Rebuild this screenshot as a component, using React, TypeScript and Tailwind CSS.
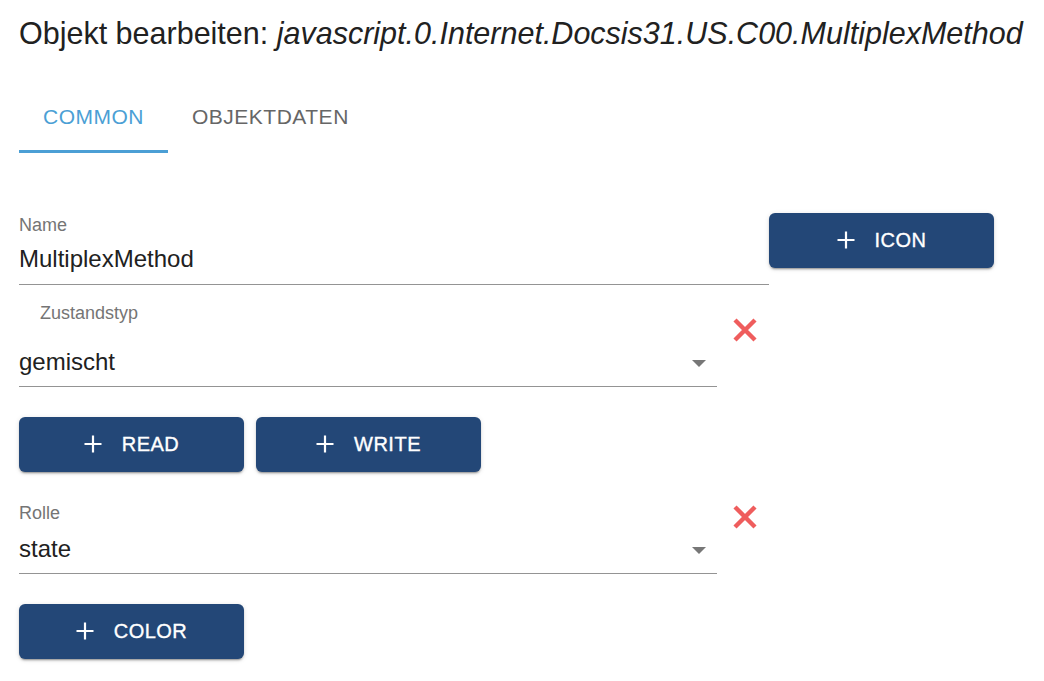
import React from "react";

const font = "font-['Liberation_Sans',Arial,sans-serif]";

const Plus = () => (
    <svg width="18" height="18" viewBox="0 0 18 18" className="shrink-0">
        <path d="M9 0.5V17.5M0.5 9H17.5" stroke="#fff" strokeWidth="2.2" />
    </svg>
);

const RemoveX = () => (
    <svg width="26" height="26" viewBox="0 0 26 26">
        <path d="M3 3L23 23M23 3L3 23" stroke="#ef5d5d" strokeWidth="4.4" />
    </svg>
);

const DropArrow = () => (
    <svg width="14" height="7" viewBox="0 0 14 7" className="absolute right-[11px] bottom-[19px]">
        <path d="M0 0H14L7 7Z" fill="#777" />
    </svg>
);

const AddButton = ({ label }: { label: string }) => (
    <button className="flex h-[55px] w-[225px] shrink-0 items-center justify-center gap-[20px] rounded-[6px] bg-[#234777] pb-[1px] text-[20px] uppercase tracking-[0.5px] text-white shadow-[0_3px_1px_-2px_rgba(0,0,0,0.2),0_2px_2px_0_rgba(0,0,0,0.14),0_1px_5px_0_rgba(0,0,0,0.12)]">
        <Plus />
        <span className="leading-[24px] [-webkit-text-stroke:0.35px_#fff]">{label}</span>
    </button>
);

export default function App() {
    return (
        <div className={`h-[681px] w-[1044px] overflow-hidden bg-white pl-[19px] text-[#212121] ${font}`}>
            <h1 className="h-[51px] pt-[15px] text-[30.5px] leading-[36px] whitespace-nowrap">
                Objekt bearbeiten: <i>javascript.0.Internet.Docsis31.US.C00.MultiplexMethod</i>
            </h1>

            {/* tabs */}
            <div className="mt-[30px] flex">
                <div className="flex h-[72px] items-center border-b-[3px] border-[#4b9fd5] px-[24px] pt-[3px] text-[21px] tracking-[0.5px] text-[#4b9fd5]">
                    COMMON
                </div>
                <div className="flex h-[72px] items-center border-b-[3px] border-transparent px-[24px] pt-[3px] text-[21px] tracking-[0.5px] text-[#666]">
                    OBJEKTDATEN
                </div>
            </div>

            {/* name + icon */}
            <div className="mt-[60px] flex items-start">
                <div className="w-[750px] border-b border-[#949494] pt-[2px] pb-[10px]">
                    <div className="h-[20px] text-[18px] leading-[20px] text-[#757575]">Name</div>
                    <div className="mt-[9px] h-[30px] text-[24px] leading-[30px]">MultiplexMethod</div>
                </div>
                <AddButton label="Icon" />
            </div>

            {/* zustandstyp */}
            <div className="mt-[18px] flex items-start">
                <div className="relative w-[698px] border-b border-[#949494] pb-[9px]">
                    <div className="h-[20px] pl-[21px] text-[18px] leading-[20px] text-[#757575]">Zustandstyp</div>
                    <div className="mt-[24px] h-[30px] text-[24px] leading-[30px]">gemischt</div>
                    <DropArrow />
                </div>
                <div className="mt-[14px] ml-[15px]">
                    <RemoveX />
                </div>
            </div>

            <div className="mt-[30px] flex gap-[12px]">
                <AddButton label="Read" />
                <AddButton label="Write" />
            </div>

            {/* rolle */}
            <div className="mt-[31px] flex items-start">
                <div className="relative w-[698px] border-b border-[#949494] pb-[9px]">
                    <div className="h-[20px] text-[18px] leading-[20px] text-[#757575]">Rolle</div>
                    <div className="mt-[11px] h-[30px] text-[24px] leading-[30px]">state</div>
                    <DropArrow />
                </div>
                <div className="mt-[1px] ml-[15px]">
                    <RemoveX />
                </div>
            </div>

            <div className="mt-[30px]">
                <AddButton label="Color" />
            </div>
        </div>
    );
}
